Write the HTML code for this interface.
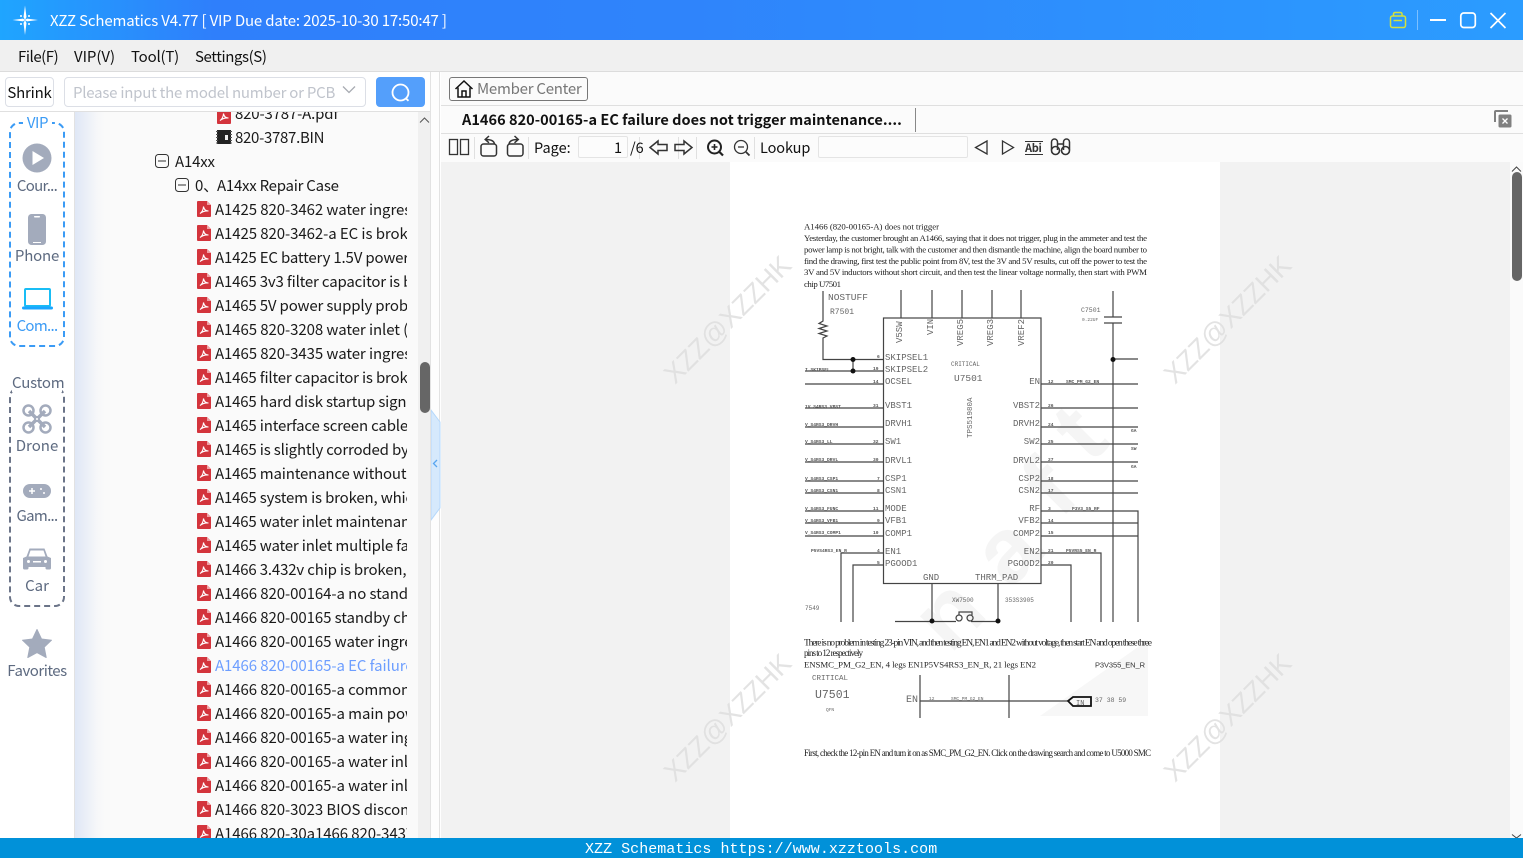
<!DOCTYPE html>
<html lang="en"><head><meta charset="utf-8"><title>XZZ Schematics</title>
<style>
*{box-sizing:border-box}
html,body{margin:0;padding:0;width:1523px;height:858px;overflow:hidden;background:#fff}
body{position:relative;font-family:"Noto Sans CJK SC","Liberation Sans",sans-serif;font-size:15px;color:#111}
.a{position:absolute;white-space:nowrap}
.t{position:absolute;white-space:nowrap;line-height:24px;height:24px;font-size:15px;letter-spacing:-.17px;color:#1a1a1a}
.t.d{letter-spacing:-.08px}
#tree{position:absolute;left:75px;top:112px;width:332px;height:726px;overflow:hidden}
#tree .t{left:140px}
#tree svg{position:absolute}
.side{position:absolute;left:0;width:74px;text-align:center;font-size:15px;color:#5d6a80;line-height:20px}
.el{letter-spacing:-.7px}
svg text{white-space:pre}
</style></head><body>
<svg width="0" height="0" style="position:absolute"><defs>
<symbol id="pdf" viewBox="0 0 14 16"><path d="M1 0H10L14 4V15a1 1 0 0 1-1 1H1a1 1 0 0 1-1-1V1a1 1 0 0 1 1-1Z" fill="#d3343c"/><path d="M10 0L14 4H10Z" fill="#f0a0a4"/><path d="M3 12.5C5 11.5 6.5 8 6.5 5.5C7 9 9 10 11.5 10C9 9.8 5.5 10.5 3 12.5Z" fill="none" stroke="#fff" stroke-width="1.1"/></symbol>
</defs></svg>

<!-- title bar -->
<div class="a" style="left:0;top:0;width:1523px;height:40px;background:linear-gradient(90deg,#1fa5ff 0,#2f7ffb 14%,#2f84fb 45%,#2b9cff 100%)"></div>
<svg class="a" style="left:10px;top:4px" width="32" height="32" viewBox="0 0 32 32"><path d="M15 1.5L16.5 13 15 16 13.5 13ZM15 31L13.5 19 15 16 16.5 19ZM2.5 16L13 14.6 15 16 13 17.4ZM28 16L17 17.4 15 16 17 14.6Z" fill="#fff"/><circle cx="11" cy="12" r="1" fill="#fff"/><circle cx="19" cy="12" r="1" fill="#fff"/><circle cx="11" cy="20" r="1" fill="#fff"/><circle cx="19" cy="20" r="1" fill="#fff"/></svg>
<div class="a" style="left:50px;top:10px;line-height:22px;font-size:15px;color:#fff;letter-spacing:-.16px">XZZ Schematics V4.77 [ VIP Due date: 2025-10-30 17:50:47 ]</div>
<svg class="a" style="left:1385px;top:8px" width="130" height="24" viewBox="0 0 130 24" fill="none"><path d="M8.500 8V6a1.500 1.500 0 0 1 1.500-1.500h5.500a1.500 1.500 0 0 1 1.500 1.500V8" stroke="#d4e13c" stroke-width="1.500"/><rect x="5.500" y="8" width="15" height="11.500" rx="2" stroke="#d4e13c" stroke-width="1.500"/><path d="M8.500 12.500h8.500" stroke="#d4e13c" stroke-width="1.500"/><path d="M32.500 2v20" stroke="#7cc0ff"/><path d="M45 12h16" stroke="#fff" stroke-width="2"/><rect x="75.800" y="5" width="14.500" height="14.500" rx="3" stroke="#fff" stroke-width="1.700"/><path d="M105.500 5l15 15M120.500 5l-15 15" stroke="#fff" stroke-width="1.700"/></svg>

<!-- menu bar -->
<div class="a" style="left:0;top:40px;width:1523px;height:32px;background:#f0f0f0;border-bottom:1px solid #dcdcdc"></div>
<div class="a" style="left:18px;top:46px;line-height:22px;font-size:15px;letter-spacing:-.45px">File(F)</div>
<div class="a" style="left:74px;top:46px;line-height:22px;font-size:15px;letter-spacing:-.05px">VIP(V)</div>
<div class="a" style="left:131px;top:46px;line-height:22px;font-size:15px;letter-spacing:-.2px">Tool(T)</div>
<div class="a" style="left:195px;top:46px;line-height:22px;font-size:15px;letter-spacing:-.4px">Settings(S)</div>

<!-- search row -->
<div class="a" style="left:0;top:72px;width:431px;height:40px;background:#fff;border-bottom:1px solid #e0e0e0"></div>
<div class="a" style="left:5px;top:77px;width:49px;height:30px;border:1px solid #dcdfe6;border-radius:4px;text-align:center;line-height:30px;font-size:15px;letter-spacing:-.2px">Shrink</div>
<div class="a" style="left:64px;top:77px;width:302px;height:30px;border:1px solid #dcdfe6;border-radius:4px"></div>
<div class="a" style="left:73px;top:83px;line-height:20px;font-size:15px;color:#c0c4cc;letter-spacing:-.23px">Please input the model number or PCB</div>
<svg class="a" style="left:342px;top:85px" width="14" height="10" viewBox="0 0 14 10" fill="none"><path d="M1 1.500L7 7.500 13 1.500" stroke="#a8abb2" stroke-width="1.300"/></svg>
<div class="a" style="left:376px;top:77px;width:49px;height:30px;border-radius:4px;background:#549ffb"></div>
<svg class="a" style="left:390px;top:82px" width="22" height="22" viewBox="0 0 22 22" fill="none"><circle cx="10.500" cy="10.500" r="8" stroke="#fff" stroke-width="1.800"/><path d="M15.500 16l3 2.800" stroke="#fff" stroke-width="1.800"/></svg>

<!-- left sidebar -->
<div class="a" style="left:74px;top:112px;width:1px;height:726px;background:#e2e2e2"></div>
<div class="a" style="left:9px;top:122px;width:56px;height:225px;border:2px dashed #3b9bf5;border-radius:10px"></div>
<div class="a" style="left:23px;top:114px;width:29px;height:18px;background:#fff;text-align:center;line-height:18px;font-size:15px;color:#3b9bf5;letter-spacing:-.4px">VIP</div>
<svg class="a" style="left:22px;top:143px" width="30" height="30" viewBox="0 0 30 30"><circle cx="15" cy="15" r="14.500" fill="#a3abbc"/><path d="M10.500 8L22 15 10.500 22Z" fill="#fff"/></svg>
<div class="side el" style="top:176px">Cour...</div>
<svg class="a" style="left:28px;top:214px" width="18" height="31" viewBox="0 0 18 31"><rect width="18" height="31" rx="3.500" fill="#a3abbc"/><rect x="6" y="2" width="6" height="1.500" rx=".7" fill="#fff"/><rect x="5" y="28" width="8" height="1" fill="#fff"/></svg>
<div class="side" style="top:246px;letter-spacing:-.2px">Phone</div>
<svg class="a" style="left:22px;top:288px" width="31" height="22" viewBox="0 0 31 22" fill="none"><rect x="3" y="1" width="25" height="17" rx="1" stroke="#19bdf5" stroke-width="2"/><rect x="0" y="18.500" width="31" height="3" rx="1.500" fill="#1aa6ff"/></svg>
<div class="side el" style="top:316px;color:#3b9bf5">Com...</div>

<div class="a" style="left:9px;top:387px;width:56px;height:220px;border:2px dashed #6b7488;border-radius:10px"></div>
<div class="a" style="left:12px;top:374px;width:50px;height:18px;background:#fff;text-align:center;line-height:18px;font-size:15px;color:#5d6a80;letter-spacing:-.2px">Custom</div>
<svg class="a" style="left:22px;top:404px" width="30" height="30" viewBox="0 0 30 30" fill="none" stroke="#a3abbc"><circle cx="6.500" cy="6.500" r="5" stroke-width="2.500"/><circle cx="23.500" cy="6.500" r="5" stroke-width="2.500"/><circle cx="6.500" cy="23.500" r="5" stroke-width="2.500"/><circle cx="23.500" cy="23.500" r="5" stroke-width="2.500"/><path d="M7 7L23 23M23 7L7 23" stroke-width="3.500"/><circle cx="15" cy="15" r="2" fill="#fff" stroke-width="2"/></svg>
<div class="side" style="top:436px">Drone</div>
<svg class="a" style="left:23px;top:484px" width="28" height="14" viewBox="0 0 28 14"><rect width="28" height="14" rx="7" fill="#a3abbc"/><path d="M6 7h6M9 4v6" stroke="#fff" stroke-width="1.500"/><circle cx="18" cy="5" r="1" fill="#fff"/><circle cx="21" cy="9" r="1" fill="#fff"/></svg>
<div class="side el" style="top:506px">Gam...</div>
<svg class="a" style="left:23px;top:547px" width="28" height="24" viewBox="0 0 28 24"><path d="M6.500 1.500H21.500L24.500 9.500 28 11V21a1.500 1.500 0 0 1-1.500 1.500H24a1.500 1.500 0 0 1-1.500-1.500V20H5.500V21A1.500 1.500 0 0 1 4 22.500H1.500A1.500 1.500 0 0 1 0 21V11L3.500 9.500Z" fill="#a3abbc"/><path d="M7.500 3.500H20.500L22.500 9.500H5.500Z" fill="#fff"/><circle cx="5.500" cy="14.500" r="1.500" fill="#fff"/><circle cx="22.500" cy="14.500" r="1.500" fill="#fff"/><rect x="10" y="14" width="8" height="1.500" fill="#fff"/></svg>
<div class="side" style="top:576px">Car</div>
<svg class="a" style="left:22px;top:629px" width="30" height="29" viewBox="0 0 30 29"><path d="M15 .5L19.500 10 29.500 11.200 22.200 18.200 24.200 28.500 15 23.500 5.800 28.500 7.800 18.200 .5 11.200 10.500 10Z" fill="#a3abbc" stroke="#a3abbc" stroke-linejoin="round" stroke-width="1"/></svg>
<div class="side" style="top:661px;letter-spacing:-.48px">Favorites</div>

<!-- tree panel -->
<div class="a" style="left:75px;top:112px;width:356px;height:726px;background:linear-gradient(90deg,#dfe7f6 0,#f6f7f9 22px,#fafafa 30px,#fafafa 100%)"></div>
<div class="a" style="left:418px;top:112px;width:12px;height:726px;background:#f0f0f0"></div>
<div class="a" style="left:430px;top:72px;width:1px;height:766px;background:#e2e2e2"></div>
<svg class="a" style="left:419px;top:116px" width="11" height="8" viewBox="0 0 11 8" fill="none"><path d="M1 6.500L5.500 2 10 6.500" stroke="#555" stroke-width="1"/></svg>
<div class="a" style="left:420px;top:362px;width:10px;height:51px;border-radius:5px;background:#666"></div>
<div id="tree">
<svg style="left:142px;top:-4px" width="14" height="16"><use href="#pdf"/></svg><div class="t" style="left:160px;top:-10px">820-3787-A.pdf</div>
<svg style="left:141px;top:18px" width="16" height="14" viewBox="0 0 16 14"><rect x="1" y="0" width="14" height="14" fill="#222"/><path d="M0 1.500h16M0 4.500h16M0 7.500h16M0 10.500h16M0 13h16" stroke="#555" stroke-width="1"/><rect x="2" y="0" width="12" height="14" fill="#222"/><rect x="9" y="5" width="3" height="5" fill="#eee"/></svg><div class="t" style="left:160px;top:14px;letter-spacing:-.3px">820-3787.BIN</div>
<svg style="left:80px;top:42px" width="14" height="14" fill="none"><rect x=".5" y=".5" width="13" height="13" rx="3" stroke="#333"/><path d="M3 7h8" stroke="#333"/></svg><div class="t" style="left:100px;top:38px">A14xx</div>
<svg style="left:100px;top:66px" width="14" height="14" fill="none"><rect x=".5" y=".5" width="13" height="13" rx="3" stroke="#333"/><path d="M3 7h8" stroke="#333"/></svg><div class="t" style="left:120px;top:62px">0、</div><div class="t" style="left:142px;top:62px;letter-spacing:-.25px">A14xx Repair Case</div>

<svg style="left:122px;top:89px" width="14" height="16"><use href="#pdf"/></svg><div class="t d" style="top:86px">A1425 820-3462 water ingress</div>
<svg style="left:122px;top:113px" width="14" height="16"><use href="#pdf"/></svg><div class="t d" style="top:110px">A1425 820-3462-a EC is broken</div>
<svg style="left:122px;top:137px" width="14" height="16"><use href="#pdf"/></svg><div class="t" style="top:134px">A1425 EC battery 1.5V power supply</div>
<svg style="left:122px;top:161px" width="14" height="16"><use href="#pdf"/></svg><div class="t" style="top:158px">A1465 3v3 filter capacitor is broken</div>
<svg style="left:122px;top:185px" width="14" height="16"><use href="#pdf"/></svg><div class="t" style="top:182px">A1465 5V power supply problem</div>
<svg style="left:122px;top:209px" width="14" height="16"><use href="#pdf"/></svg><div class="t d" style="top:206px">A1465 820-3208 water inlet (</div>
<svg style="left:122px;top:233px" width="14" height="16"><use href="#pdf"/></svg><div class="t d" style="top:230px">A1465 820-3435 water ingress</div>
<svg style="left:122px;top:257px" width="14" height="16"><use href="#pdf"/></svg><div class="t" style="top:254px">A1465 filter capacitor is broken</div>
<svg style="left:122px;top:281px" width="14" height="16"><use href="#pdf"/></svg><div class="t" style="top:278px">A1465 hard disk startup signal</div>
<svg style="left:122px;top:305px" width="14" height="16"><use href="#pdf"/></svg><div class="t" style="top:302px">A1465 interface screen cable</div>
<svg style="left:122px;top:329px" width="14" height="16"><use href="#pdf"/></svg><div class="t" style="top:326px">A1465 is slightly corroded by</div>
<svg style="left:122px;top:353px" width="14" height="16"><use href="#pdf"/></svg><div class="t" style="top:350px">A1465 maintenance without</div>
<svg style="left:122px;top:377px" width="14" height="16"><use href="#pdf"/></svg><div class="t" style="top:374px">A1465 system is broken, which</div>
<svg style="left:122px;top:401px" width="14" height="16"><use href="#pdf"/></svg><div class="t" style="top:398px">A1465 water inlet maintenance</div>
<svg style="left:122px;top:425px" width="14" height="16"><use href="#pdf"/></svg><div class="t" style="top:422px">A1465 water inlet multiple faults</div>
<svg style="left:122px;top:449px" width="14" height="16"><use href="#pdf"/></svg><div class="t" style="top:446px">A1466 3.432v chip is broken,</div>
<svg style="left:122px;top:473px" width="14" height="16"><use href="#pdf"/></svg><div class="t d" style="top:470px">A1466 820-00164-a no standby</div>
<svg style="left:122px;top:497px" width="14" height="16"><use href="#pdf"/></svg><div class="t d" style="top:494px">A1466 820-00165 standby ch</div>
<svg style="left:122px;top:521px" width="14" height="16"><use href="#pdf"/></svg><div class="t d" style="top:518px">A1466 820-00165 water ingress</div>
<svg style="left:122px;top:545px" width="14" height="16"><use href="#pdf"/></svg><div class="t d" style="top:542px;color:#6d9eff">A1466 820-00165-a EC failure</div>
<svg style="left:122px;top:569px" width="14" height="16"><use href="#pdf"/></svg><div class="t d" style="top:566px">A1466 820-00165-a common</div>
<svg style="left:122px;top:593px" width="14" height="16"><use href="#pdf"/></svg><div class="t d" style="top:590px">A1466 820-00165-a main power</div>
<svg style="left:122px;top:617px" width="14" height="16"><use href="#pdf"/></svg><div class="t d" style="top:614px">A1466 820-00165-a water ingress</div>
<svg style="left:122px;top:641px" width="14" height="16"><use href="#pdf"/></svg><div class="t d" style="top:638px">A1466 820-00165-a water inlet</div>
<svg style="left:122px;top:665px" width="14" height="16"><use href="#pdf"/></svg><div class="t d" style="top:662px">A1466 820-00165-a water inlet</div>
<svg style="left:122px;top:689px" width="14" height="16"><use href="#pdf"/></svg><div class="t d" style="top:686px">A1466 820-3023 BIOS disconnect</div>
<svg style="left:122px;top:713px" width="14" height="16"><use href="#pdf"/></svg><div class="t d" style="top:710px">A1466 820-30a1466 820-3437</div>
</div>

<!-- splitter -->
<div class="a" style="left:431px;top:72px;width:9px;height:766px;background:#fdfdfd;border-right:1px solid #e2e2e2"></div>
<svg class="a" style="left:431px;top:408px" width="10" height="114" viewBox="0 0 10 114"><path d="M0 2L9 14V100L0 112Z" fill="#d6e9fc" stroke="#b5d8fb"/><path d="M6 52L2.500 55.500 6 59" fill="none" stroke="#5aa6f0" stroke-width="1.300"/></svg>

<!-- right header rows -->
<div class="a" style="left:441px;top:72px;width:1082px;height:90px;background:#fbfbfb"></div>
<div class="a" style="left:441px;top:105px;width:1082px;height:1px;background:#dfdfdf"></div>
<div class="a" style="left:441px;top:133px;width:1082px;height:1px;background:#dfdfdf"></div>
<div class="a" style="left:449px;top:77px;width:139px;height:24px;border:1px solid #777;border-radius:3px"></div>
<svg class="a" style="left:454px;top:79px" width="20" height="20" viewBox="0 0 20 20" fill="none" stroke="#111" stroke-width="1.500"><path d="M1.500 10L10 2 18.500 10"/><path d="M4 8.500V18H16V8.500"/><path d="M8 18V12H12V18"/></svg>
<div class="a" style="left:477px;top:78px;line-height:22px;font-size:15px;color:#777;letter-spacing:-.25px">Member Center</div>
<div class="a" style="left:462px;top:109px;line-height:22px;font-size:14.500px;font-weight:700;color:#111;letter-spacing:.03px">A1466 820-00165-a EC failure does not trigger maintenance....</div>
<div class="a" style="left:915px;top:108px;width:1px;height:24px;background:#888"></div>
<svg class="a" style="left:1494px;top:110px" width="18" height="18" viewBox="0 0 18 18" fill="none"><path d="M1 12V2a1 1 0 0 1 1-1H14" stroke="#808080" stroke-width="2"/><rect x="4.500" y="4.500" width="13" height="13" rx="1.500" fill="#808080"/><path d="M8.500 8.500l5 5M13.500 8.500l-5 5" stroke="#fff" stroke-width="1.300"/></svg>

<!-- toolbar -->
<svg class="a" style="left:441px;top:134px" width="640" height="28" viewBox="0 0 640 28" fill="none" stroke="#333" stroke-width="1.300">
<rect x="8.500" y="5.500" width="8" height="15"/><rect x="19.500" y="5.500" width="8" height="15"/>
<path d="M33.500 3v22M87.500 3v22M198.500 3v22M237.500 3v22M255.500 3v22M313.500 3v22" stroke="#e0e0e0" stroke-width="1"/>
<rect x="40" y="10" width="15.500" height="12" rx="2.500" stroke-width="1.500"/><path d="M53.500 10C53 7 50.500 5.500 45 5.500M48 2L44.200 5.500 48 8.800" stroke-width="1.500"/>
<rect x="66.500" y="10" width="15.500" height="12" rx="2.500" stroke-width="1.500"/><path d="M68 10C68.500 7 71 5.500 76.500 5.500M73.500 2L77.300 5.500 73.500 8.800" stroke-width="1.500"/>
<path d="M209 13.500L217 7V10.500H226V16.500H217V20Z" stroke-width="1.500"/>
<path d="M234 10.500H243V7L251 13.500 243 20V16.500H234Z" stroke-width="1.500"/>
<circle cx="273.500" cy="13" r="6.500" stroke-width="2" stroke="#222"/><path d="M278.500 18l3.500 3.500" stroke-width="2.200" stroke="#222"/><path d="M270.500 13h6M273.500 10v6" stroke-width="1.600" stroke="#222"/>
<circle cx="300" cy="13" r="6.500"/><path d="M305 18l3.500 3.500" stroke-width="1.800"/><path d="M297 13h6"/>
<path d="M546 7L534.500 13.500 546 20Z"/><path d="M561.500 7L572.500 13.500 561.500 20Z"/>
<path d="M584 7.500h18" stroke-width="1"/><path d="M584 20.500h18" stroke-width="1"/>
<circle cx="614.500" cy="16.500" r="4" stroke-width="1.600"/><circle cx="624.500" cy="16.500" r="4" stroke-width="1.600"/><path d="M610.500 16V8a3 3 0 0 1 6 0V16M622.500 16V8a3 3 0 0 1 6 0V16M616.500 10h6" stroke-width="1.500"/>
</svg>
<div class="a" style="left:534px;top:137px;line-height:22px;font-size:14.500px">Page:</div>
<div class="a" style="left:578px;top:136px;width:50px;height:22px;border:1px solid #e4e4e4;border-radius:2px;background:#fcfcfc;text-align:right;padding-right:5px;line-height:22px;font-size:14.500px">1</div>
<div class="a" style="left:630px;top:137px;line-height:22px;font-size:14.500px">/6</div>
<div class="a" style="left:760px;top:137px;line-height:22px;font-size:14.500px;letter-spacing:-.1px">Lookup</div>
<div class="a" style="left:818px;top:136px;width:150px;height:22px;border:1px solid #e4e4e4;border-radius:2px;background:#fcfcfc"></div>
<div class="a" style="left:1025px;top:141px;line-height:14px;font-size:11px;font-weight:700;color:#333;letter-spacing:-.3px">Abi</div>

<!-- viewer -->
<div class="a" style="left:441px;top:162px;width:1069px;height:676px;background:#f2f2f2"></div>
<div class="a" style="left:1510px;top:162px;width:13px;height:676px;background:#fafafa"></div>
<svg class="a" style="left:1511px;top:165px" width="11" height="8" viewBox="0 0 11 8" fill="none"><path d="M1 6.500L5.500 2 10 6.500" stroke="#444"/></svg>
<div class="a" style="left:1512px;top:172px;width:10px;height:109px;border-radius:5px;background:#666"></div>
<svg class="a" style="left:1511px;top:834px" width="11" height="4" viewBox="0 0 11 4" fill="none"><path d="M1 .5L5.500 4 10 .5" stroke="#444"/></svg>
<div class="a" style="left:730px;top:162px;width:490px;height:676px;background:#fff"></div>

<!-- page content -->
<svg class="a" style="left:0;top:0;filter:blur(.35px)" width="1523" height="838" viewBox="0 0 1523 838">
<!-- large faint watermark -->
<g font-family="Liberation Sans, sans-serif" font-weight="700" fill="#f5f5f5" font-size="92">
<text transform="translate(950 655) rotate(-45)">n</text>
<text transform="translate(1010 590) rotate(-45)">a</text>
<text transform="translate(1060 520) rotate(-45)">f</text>
<text transform="translate(1090 465) rotate(-45)">t</text>
</g>
<path d="M1040 716L1148 640V716Z" fill="#f7f7f7"/>

<g font-family="Liberation Serif, serif" font-size="8.800" fill="#222">
<text x="804" y="229.500" textLength="135">A1466 (820-00165-A) does not trigger</text>
<text x="804" y="241" textLength="343">Yesterday, the customer brought an A1466, saying that it does not trigger, plug in the ammeter and test the</text>
<text x="804" y="252.500" textLength="343">power lamp is not bright, talk with the customer and then dismantle the machine, align the board number to</text>
<text x="804" y="264" textLength="343">find the drawing, first test the public point from 8V, test the 3V and 5V results, cut off the power to test the</text>
<text x="804" y="275" textLength="343">3V and 5V inductors without short circuit, and then test the linear voltage normally, then start with PWM</text>
<text x="804" y="287" textLength="37">chip U7501</text>
<text x="804" y="645.500" font-size="9.500" textLength="348">There is no problem in testing 23-pin VIN, and then testing EN, EN1 and EN2 without voltage, then start EN and open these three</text>
<text x="804" y="656" font-size="9" textLength="59">pins to 12 respectively</text>
<text x="804" y="667.500" textLength="232">ENSMC_PM_G2_EN, 4 legs EN1P5VS4RS3_EN_R, 21 legs EN2</text>
<text x="804" y="756" font-size="8.900" textLength="347">First, check the 12-pin EN and turn it on as SMC_PM_G2_EN. Click on the drawing search and come to U5000 SMC</text>
</g>
<text x="1095" y="667.500" font-family="Liberation Sans, sans-serif" font-size="7.500" fill="#333" textLength="50">P3V355_EN_R</text>

<g stroke="#444" stroke-width="1.200" fill="none">
<rect x="883.500" y="318" width="157.500" height="265.500"/>
<path d="M901 290V318M932 290V318M962 290V318M992 290V318M1021 290V318"/>
<path d="M823 291V321L819 323.500 827 326 819 328.500 827 331 819 333.500 827 336 823 338V359.500H883"/>
<path d="M853 359V371"/>
<path d="M805 371H883M805 384H883M805 408H883M805 427H883M805 444H883M805 462H883M805 481H883M805 493H883M805 511H883M805 523H883M805 536H883"/>
<path d="M841 622V553H883M853 622V565H883"/>
<path d="M1041 384H1138M1041 408H1138M1041 427H1138M1041 444H1138M1041 462H1138M1041 481H1138M1041 493H1138M1041 511H1138V622M1041 523H1138M1041 536H1138"/>
<path d="M1041 553H1101V622M1041 565H1071V622"/>
<path d="M1113 291V317M1113 323V622M1104 317H1122M1104 323H1122M1113 359H1138"/>
<path d="M932 583V621M998 583V621M895 621.500H956M971 621.500H998"/>
<path d="M959 621a3 3 0 1 1 .1 0M970 621a3 3 0 1 1 .1 0M959 615V612H972V615"/>
<path d="M920 675V718M1009 675V718M920 701H1068"/>
<path d="M1068 701L1073 697H1091V706H1073Z" stroke="#111" stroke-width="1.800"/>
</g>
<g fill="#111"><circle cx="853" cy="359.500" r="2.500"/><circle cx="853" cy="371" r="2.500"/><circle cx="1113" cy="359.500" r="2.500"/><circle cx="932" cy="621" r="2.500"/><circle cx="998" cy="621" r="2.500"/></g>

<g font-family="Liberation Mono, monospace" font-size="9" fill="#666">
<text x="885" y="360">SKIPSEL1</text><text x="885" y="372">SKIPSEL2</text><text x="885" y="384">OCSEL</text>
<text x="885" y="408">VBST1</text><text x="885" y="426">DRVH1</text><text x="885" y="444">SW1</text><text x="885" y="463">DRVL1</text>
<text x="885" y="481">CSP1</text><text x="885" y="493">CSN1</text><text x="885" y="511">MODE</text><text x="885" y="523">VFB1</text><text x="885" y="536">COMP1</text>
<text x="885" y="554">EN1</text><text x="885" y="566">PGOOD1</text>
<g text-anchor="end"><text x="1040" y="384">EN</text><text x="1040" y="408">VBST2</text><text x="1040" y="426">DRVH2</text><text x="1040" y="444">SW2</text><text x="1040" y="463">DRVL2</text><text x="1040" y="481">CSP2</text><text x="1040" y="493">CSN2</text><text x="1040" y="511">RF</text><text x="1040" y="523">VFB2</text><text x="1040" y="536">COMP2</text><text x="1040" y="554">EN2</text><text x="1040" y="566">PGOOD2</text></g>
<text x="923" y="580">GND</text><text x="975" y="580">THRM_PAD</text>
<text x="828" y="300" font-size="9.500">NOSTUFF</text><text x="830" y="314" font-size="8">R7501</text>
<text x="954" y="381" font-size="9.500">U7501</text>
<text transform="translate(902 343) rotate(-90)">V5SW</text><text transform="translate(933 335) rotate(-90)">VIN</text><text transform="translate(963 346) rotate(-90)">VREG5</text><text transform="translate(993 346) rotate(-90)">VREG3</text><text transform="translate(1024 346) rotate(-90)">VREF2</text>
<text transform="translate(972 438) rotate(-90)" font-size="7.500">TPS51980A</text>
<text x="951" y="366" font-size="6">CRITICAL</text>
<text x="1081" y="312" font-size="6.500">C7501</text><text x="1082" y="321" font-size="4.500">0.22UF</text>
<text x="952" y="602" font-size="6">XW7500</text><text x="1005" y="602" font-size="6">353S3905</text>
<text x="805" y="610" font-size="6">7549</text>
<text x="812" y="680" font-size="7.500">CRITICAL</text>
<text x="815" y="698" font-size="11.500">U7501</text>
<text x="906" y="702" font-size="10">EN</text>
<text x="1095" y="702" font-size="6.500">37 38 59</text>
<text x="1076" y="705" font-size="7">IN</text>
<text x="951" y="700" font-size="4.500">SMC_PM_G2_EN</text><text x="929" y="700" font-size="4.500">12</text>
<text x="826" y="711" font-size="4.500">QFN</text>
</g>
<g font-family="Liberation Mono, monospace" font-size="4.600" font-weight="700" fill="#555">
<text x="805" y="371">I_SKIPSEL</text><text x="805" y="408">1V_S4RS3_VBST</text><text x="805" y="426">V_S4RS3_DRVH</text><text x="805" y="443">V_S4RS3_LL</text><text x="805" y="461">V_S4RS3_DRVL</text><text x="805" y="480">V_S4RS3_CSP1</text><text x="805" y="492">V_S4RS3_CSN1</text><text x="805" y="510">V_S4RS3_FUNC</text><text x="805" y="522">V_S4RS3_VFB1</text><text x="805" y="534">V_S4RS3_COMP1</text><text x="811" y="552">P5VS4RS3_EN_R</text>
<text x="1066" y="383">SMC_PM_G2_EN</text><text x="1072" y="510">P3V3_S5_RF</text><text x="1066" y="552">P5VRS5_EN_R</text>
<text x="877" y="358">6</text><text x="873" y="370">19</text><text x="873" y="383">14</text><text x="873" y="407">31</text><text x="873" y="443">32</text><text x="873" y="461">30</text><text x="877" y="480">7</text><text x="877" y="492">8</text><text x="873" y="510">11</text><text x="877" y="522">9</text><text x="873" y="534">10</text><text x="877" y="552">4</text><text x="877" y="564">5</text>
<text x="1048" y="383">12</text><text x="1048" y="407">26</text><text x="1048" y="426">24</text><text x="1048" y="443">25</text><text x="1048" y="461">27</text><text x="1048" y="480">18</text><text x="1048" y="492">17</text><text x="1048" y="510">3</text><text x="1048" y="522">14</text><text x="1048" y="534">15</text><text x="1048" y="552">21</text><text x="1048" y="564">20</text>
<text x="1131" y="432">GA</text><text x="1131" y="450">SW</text><text x="1131" y="468">GA</text>
</g>

<!-- XZZ watermarks -->
<g font-family="Liberation Sans, sans-serif" font-size="27" fill="#dcdcdc" fill-opacity=".8">
<text transform="translate(675 385) rotate(-45)">XZZ@XZZHK</text>
<text transform="translate(1175 385) rotate(-45)">XZZ@XZZHK</text>
<text transform="translate(675 783) rotate(-45)">XZZ@XZZHK</text>
<text transform="translate(1175 783) rotate(-45)">XZZ@XZZHK</text>
</g>
</svg>

<!-- footer -->
<div class="a" style="left:0;top:838px;width:1523px;height:20px;background:#0191d9"></div>
<div class="a" style="left:585px;top:840px;line-height:19px;font-family:'Liberation Mono',monospace;font-size:15px;color:#fff;letter-spacing:.03px">XZZ Schematics https://www.xzztools.com</div>
</body></html>
